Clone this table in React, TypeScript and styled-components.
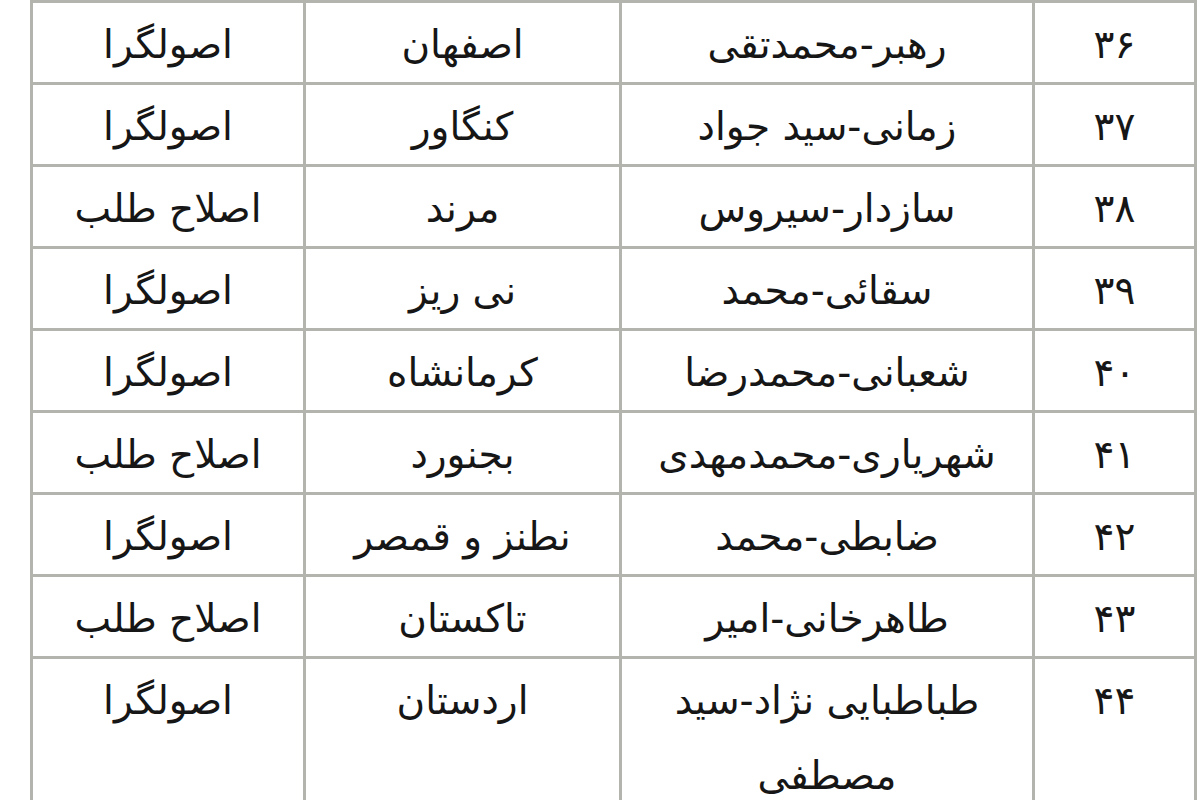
import { createGlobalStyle, styled } from "styled-components";

const GlobalStyle = createGlobalStyle`
  html, body {
    margin: 0;
    padding: 0;
    background: #ffffff;
    overflow: hidden;
  }
  body {
    font-family: "DejaVu Sans", Tahoma, sans-serif;
  }
`;

const Page = styled.div`
  width: 1200px;
  height: 800px;
  padding-left: 30px;
  box-sizing: border-box;
  overflow: hidden;
`;

const Table = styled.table`
  direction: rtl;
  width: 1167px;
  border-collapse: collapse;
  table-layout: fixed;
  border: 3px solid #b4b4ae;
`;

const Cell = styled.td<{ $width?: number }>`
  width: ${({ $width }) => ($width ? `${$width}px` : "auto")};
  box-sizing: border-box;
  border: 3px solid #b4b4ae;
  padding: 4px 8px 0;
  text-align: center;
  vertical-align: top;
  font-size: 39px;
  line-height: 75px;
  color: #161616;
`;

const rows = [
  ["۳۶", "رهبر-محمدتقی", "اصفهان", "اصولگرا"],
  ["۳۷", "زمانی-سید جواد", "کنگاور", "اصولگرا"],
  ["۳۸", "سازدار-سیروس", "مرند", "اصلاح طلب"],
  ["۳۹", "سقائی-محمد", "نی ریز", "اصولگرا"],
  ["۴۰", "شعبانی-محمدرضا", "کرمانشاه", "اصولگرا"],
  ["۴۱", "شهریاری-محمدمهدی", "بجنورد", "اصلاح طلب"],
  ["۴۲", "ضابطی-محمد", "نطنز و قمصر", "اصولگرا"],
  ["۴۳", "طاهرخانی-امیر", "تاکستان", "اصلاح طلب"],
  ["۴۴", "طباطبایی نژاد-سید مصطفی", "اردستان", "اصولگرا"],
];

export default function App() {
  return (
    <Page>
      <GlobalStyle />
      <Table>
        <tbody>
          {rows.map(([num, name, city, faction]) => (
            <tr key={num}>
              <Cell $width={162}>{num}</Cell>
              <Cell $width={413}>{name}</Cell>
              <Cell $width={316}>{city}</Cell>
              <Cell>{faction}</Cell>
            </tr>
          ))}
        </tbody>
      </Table>
    </Page>
  );
}
